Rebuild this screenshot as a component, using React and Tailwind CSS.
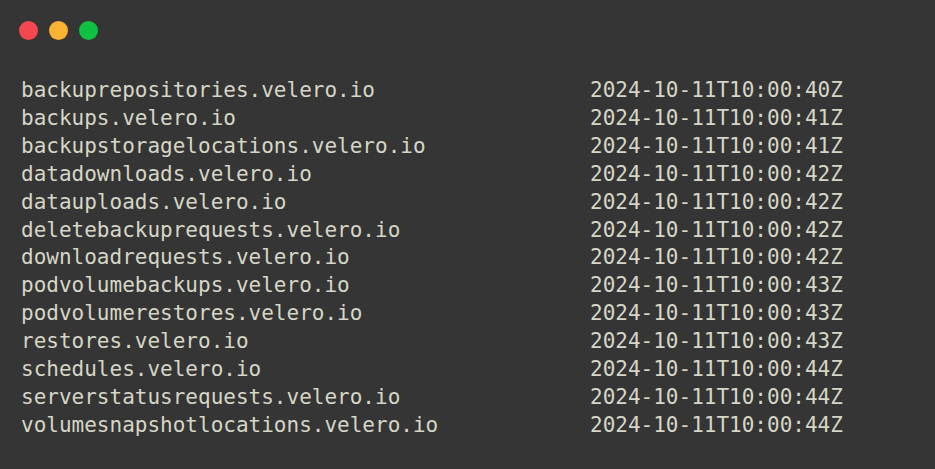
const rows = [
  ['backuprepositories.velero.io', '2024-10-11T10:00:40Z'],
  ['backups.velero.io', '2024-10-11T10:00:41Z'],
  ['backupstoragelocations.velero.io', '2024-10-11T10:00:41Z'],
  ['datadownloads.velero.io', '2024-10-11T10:00:42Z'],
  ['datauploads.velero.io', '2024-10-11T10:00:42Z'],
  ['deletebackuprequests.velero.io', '2024-10-11T10:00:42Z'],
  ['downloadrequests.velero.io', '2024-10-11T10:00:42Z'],
  ['podvolumebackups.velero.io', '2024-10-11T10:00:43Z'],
  ['podvolumerestores.velero.io', '2024-10-11T10:00:43Z'],
  ['restores.velero.io', '2024-10-11T10:00:43Z'],
  ['schedules.velero.io', '2024-10-11T10:00:44Z'],
  ['serverstatusrequests.velero.io', '2024-10-11T10:00:44Z'],
  ['volumesnapshotlocations.velero.io', '2024-10-11T10:00:44Z'],
];

const App = () => {
  return (
    <div className="w-[935px] h-[469px] bg-[#353535] overflow-hidden">
      {/* Window controls */}
      <div className="flex gap-[11px] pl-[19px] pt-[21px]">
        <span className="w-[19px] h-[19px] rounded-full bg-[#f5474f]" />
        <span className="w-[19px] h-[19px] rounded-full bg-[#fbb131]" />
        <span className="w-[19px] h-[19px] rounded-full bg-[#0fc143]" />
      </div>

      {/* Terminal output */}
      <div
        className="pl-[21px] pt-[37px] text-[21px] leading-[27.9px] text-[#d6d6c6] whitespace-pre"
        style={{ fontFamily: '"DejaVu Sans Mono", monospace' }}
      >
        {rows.map(([name, created]) => (
          <div key={name} className="flex">
            <span className="w-[569px]">{name}</span>
            <span>{created}</span>
          </div>
        ))}
      </div>
    </div>
  );
};

export default App;
